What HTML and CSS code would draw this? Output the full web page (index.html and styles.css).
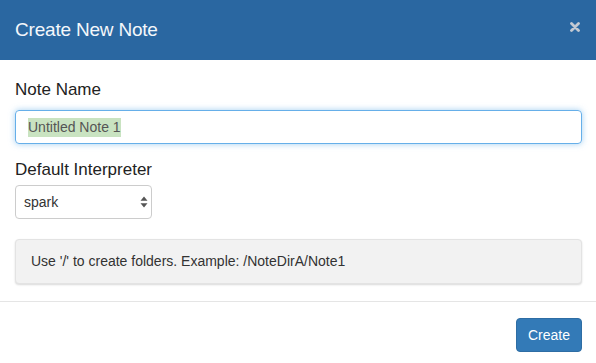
FILE: index.html
```html
<!DOCTYPE html>
<html lang="en">
<head>
  <meta charset="UTF-8" />
  <title>Create New Note</title>
  <link rel="stylesheet" href="styles.css">
</head>
<body>
  <div class="modal">
    <div class="modal-header">
      <h4 class="modal-title">Create New Note</h4>
      <button class="close" type="button" aria-label="Close">
        <svg width="10" height="10" viewBox="0 0 10 10">
          <path d="M1.5 1.5 L8.5 8.5 M8.5 1.5 L1.5 8.5" stroke="#c3c9d2" stroke-width="2.8" stroke-linecap="round" />
        </svg>
      </button>
    </div>

    <div class="modal-body">
      <label class="field-label">Note Name</label>
      <div class="note-input"><span class="selected">Untitled Note 1</span></div>

      <label class="field-label second">Default Interpreter</label>
      <div class="select-wrap">
        <select class="interpreter">
          <option>spark</option>
          <option>md</option>
          <option>sh</option>
        </select>
        <svg class="select-arrows" width="8" height="12" viewBox="0 0 8 12">
          <path d="M4 0.5 L7.5 4.8 L0.5 4.8 Z M4 11.5 L7.5 7.2 L0.5 7.2 Z" fill="#555" />
        </svg>
      </div>

      <div class="well">Use '/' to create folders. Example: /NoteDirA/Note1</div>
    </div>

    <div class="modal-footer">
      <button class="btn-primary" type="button">Create</button>
    </div>
  </div>
</body>
</html>
```

FILE: styles.css
```css
html, body {
  margin: 0;
  padding: 0;
  background: #fff;
}
body {
  font-family: 'Liberation Sans', Arial, sans-serif;
  color: #333;
  width: 596px;
  height: 363px;
  overflow: hidden;
}
.modal {
  display: flex;
  flex-direction: column;
}
.modal-header {
  height: 60px;
  background-color: #2a67a1;
  display: flex;
  align-items: center;
  justify-content: space-between;
  padding: 0 16px 0 15px;
  box-sizing: border-box;
}
.modal-title {
  margin: 0;
  color: #f4f7fb;
  font-size: 19px;
  font-weight: 300;
  letter-spacing: -0.2px;
}
.close {
  background: none;
  border: none;
  padding: 0;
  margin-top: -6px;
  cursor: pointer;
  display: flex;
}
.modal-body {
  padding: 20px 14px 0 15px;
  display: flex;
  flex-direction: column;
  align-items: flex-start;
}
.field-label {
  font-size: 17px;
  line-height: 20px;
  color: #222;
  margin-bottom: 10px;
}
.field-label.second {
  margin-top: 16px;
  margin-bottom: 5px;
}
.note-input {
  align-self: stretch;
  height: 34px;
  box-sizing: border-box;
  border: 1px solid #66afe9;
  border-radius: 4px;
  box-shadow: 0 0 6px rgba(102, 175, 233, 0.6);
  padding: 0 12px;
  display: flex;
  align-items: center;
  font-size: 14px;
  color: #555;
}
.selected {
  background-color: #c9e3c1;
  line-height: 19px;
}
.select-wrap {
  position: relative;
  display: inline-block;
}
.interpreter {
  appearance: none;
  -webkit-appearance: none;
  width: 137px;
  height: 34px;
  padding: 0 8px;
  border: 1px solid #ccc;
  border-radius: 4px;
  background: #fff;
  font-family: 'Liberation Sans', Arial, sans-serif;
  font-size: 14px;
  color: #333;
  display: block;
}
.select-arrows {
  position: absolute;
  right: 4px;
  top: 11px;
  pointer-events: none;
}
.well {
  align-self: stretch;
  margin-top: 20px;
  background-color: #f2f2f2;
  border: 1px solid #e3e3e3;
  border-radius: 4px;
  box-shadow: 0 1px 2px rgba(0, 0, 0, 0.15);
  padding: 11px 15px 12px;
  font-size: 14px;
  line-height: 20px;
  color: #333;
}
.modal-footer {
  margin-top: 17px;
  border-top: 1px solid #e5e5e5;
  padding: 16px 14px 0 15px;
  display: flex;
  justify-content: flex-end;
}
.btn-primary {
  background-color: #337ab7;
  border: 1px solid #2e6da4;
  color: #fff;
  font-family: 'Liberation Sans', Arial, sans-serif;
  font-size: 14px;
  line-height: 20px;
  padding: 6px 11px;
  border-radius: 4px;
  cursor: pointer;
}
```
